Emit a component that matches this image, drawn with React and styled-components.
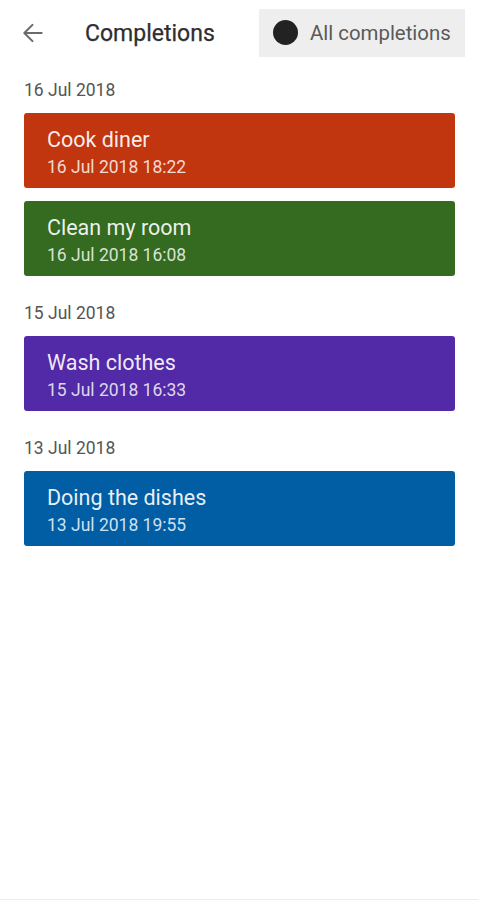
import { styled, createGlobalStyle } from "styled-components";

const GlobalStyle = createGlobalStyle`
  html, body {
    margin: 0;
    padding: 0;
    background: #fff;
    font-family: Roboto, "Noto Sans", Arial, sans-serif;
  }
`;

const Page = styled.div`
  box-sizing: border-box;
  width: 478px;
  min-height: 900px;
  border-bottom: 1px solid #ececec;
  background: #fff;
`;

const Header = styled.header`
  height: 66px;
  display: flex;
  align-items: center;
  padding: 0 13px 0 19px;
  box-sizing: border-box;
`;

const BackButton = styled.button`
  width: 28px;
  height: 28px;
  padding: 0;
  border: 0;
  background: none;
  display: flex;
  align-items: center;
  justify-content: center;
  color: #6b6b6b;
  margin-bottom: 1px;
`;

const Title = styled.h1`
  margin: 0 0 0 38px;
  font-size: 23px;
  font-weight: 400;
  color: #2e2e2e;
  flex: 1;
  -webkit-text-stroke: 0.25px #2e2e2e;
`;

const FilterChip = styled.div`
  height: 48px;
  width: 206px;
  box-sizing: border-box;
  display: flex;
  align-items: center;
  gap: 12px;
  padding-left: 14px;
  background: #eeeeee;
  margin-top: -1px;
  font-size: 20.4px;
  color: #5a5a5a;
`;

const Dot = styled.span`
  width: 25px;
  height: 25px;
  border-radius: 50%;
  background: #222;
  flex-shrink: 0;
`;

const List = styled.main`
  padding: 0 23px 0 24px;
`;

const Group = styled.section`
  margin-top: ${({ first }) => (first ? "12px" : "25px")};
`;

const DateLabel = styled.div`
  height: 24px;
  line-height: 24px;
  font-size: 17.5px;
  color: #555;
  margin-bottom: 11px;
`;

const Cards = styled.div`
  display: flex;
  flex-direction: column;
  gap: 13px;
`;

const Card = styled.div`
  height: 75px;
  box-sizing: border-box;
  border-radius: 3px;
  padding: 14px 23px 0;
  background: ${({ color }) => color};
  color: #fff;
`;

const CardTitle = styled.div`
  font-size: 21.5px;
  line-height: 26px;
  color: rgba(255, 255, 255, 0.92);
`;

const CardTime = styled.div`
  font-size: 17.5px;
  line-height: 20px;
  margin-top: 4px;
  color: rgba(255, 255, 255, 0.82);
`;

const groups = [
  {
    date: "16 Jul 2018",
    items: [
      { title: "Cook diner", time: "16 Jul 2018 18:22", color: "#c1360f" },
      { title: "Clean my room", time: "16 Jul 2018 16:08", color: "#346b20" },
    ],
  },
  {
    date: "15 Jul 2018",
    items: [
      { title: "Wash clothes", time: "15 Jul 2018 16:33", color: "#5229a7" },
    ],
  },
  {
    date: "13 Jul 2018",
    items: [
      { title: "Doing the dishes", time: "13 Jul 2018 19:55", color: "#015ea5" },
    ],
  },
];

const ArrowBack = () => (
  <svg width="26" height="26" viewBox="0 0 24 24" fill="none">
    <path
      d="M20 12H4.5M11.5 4.5L4 12l7.5 7.5"
      stroke="currentColor"
      strokeWidth="1.9"
      strokeLinecap="round"
      strokeLinejoin="round"
    />
  </svg>
);

export default function App() {
  return (
    <>
      <GlobalStyle />
      <Page>
        <Header>
          <BackButton aria-label="Back">
            <ArrowBack />
          </BackButton>
          <Title>Completions</Title>
          <FilterChip>
            <Dot />
            All completions
          </FilterChip>
        </Header>
        <List>
          {groups.map((group, i) => (
            <Group key={group.date} first={i === 0}>
              <DateLabel>{group.date}</DateLabel>
              <Cards>
                {group.items.map((item) => (
                  <Card key={item.title} color={item.color}>
                    <CardTitle>{item.title}</CardTitle>
                    <CardTime>{item.time}</CardTime>
                  </Card>
                ))}
              </Cards>
            </Group>
          ))}
        </List>
      </Page>
    </>
  );
}
